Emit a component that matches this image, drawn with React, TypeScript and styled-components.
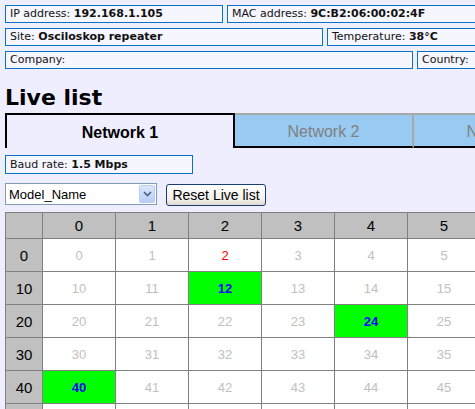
import styled, { createGlobalStyle } from 'styled-components'

const GlobalStyle = createGlobalStyle`
  html, body {
    margin: 0;
    padding: 0;
    overflow: hidden;
    background: #eeeeff;
  }
`

const COLS = [0, 1, 2, 3, 4, 5, 6, 7, 8, 9]
const ROWS = [0, 10, 20, 30, 40, 50, 60]
const ONLINE = [12, 24, 40]
const SELF = 2

type Status = 'off' | 'on' | 'self'

const statusOf = (n: number): Status => {
  if (n === SELF) return 'self'
  if (ONLINE.includes(n)) return 'on'
  return 'off'
}

export default function App() {
  return (
    <>
      <GlobalStyle />
      <Page>
        <InfoRow>
          <InfoBox $width={218}>
            IP address: <b>192.168.1.105</b>
          </InfoBox>
          <InfoBox>
            MAC address: <b>9C:B2:06:00:02:4F</b>
          </InfoBox>
        </InfoRow>
        <InfoRow>
          <InfoBox $width={318}>
            Site: <b>Osciloskop repeater</b>
          </InfoBox>
          <InfoBox>
            Temperature: <b>38°C</b>
          </InfoBox>
        </InfoRow>
        <InfoRow>
          <InfoBox $width={408}>Company:</InfoBox>
          <InfoBox>Country:</InfoBox>
        </InfoRow>

        <Title>Live list</Title>

        <Tabs>
          <Tab $active>Network 1</Tab>
          <Tab>Network 2</Tab>
          <Tab>Network 3</Tab>
        </Tabs>

        <BaudBox>
          Baud rate: <b>1.5 Mbps</b>
        </BaudBox>

        <Controls>
          <SelectWrap>
            <Select defaultValue="Model_Name">
              <option>Model_Name</option>
              <option>Address</option>
            </Select>
            <SelectArrow>
              <svg width="9" height="6" viewBox="0 0 9 6">
                <path d="M1 1l3.5 3.5L8 1" fill="none" stroke="#4d6185" strokeWidth="1.6" />
              </svg>
            </SelectArrow>
          </SelectWrap>
          <ResetButton>Reset Live list</ResetButton>
        </Controls>

        <Grid>
          <thead>
            <tr>
              <Corner />
              {COLS.map((c) => (
                <HeadCell key={c}>{c}</HeadCell>
              ))}
            </tr>
          </thead>
          <tbody>
            {ROWS.map((r) => (
              <tr key={r}>
                <RowHead>{r}</RowHead>
                {COLS.map((c) => (
                  <Cell key={c} $status={statusOf(r + c)}>
                    {r + c}
                  </Cell>
                ))}
              </tr>
            ))}
          </tbody>
        </Grid>
      </Page>
    </>
  )
}

/**
 * style定義
 */
const Page = styled.div`
  padding: 5px;
  width: 900px;
  font-family: 'DejaVu Sans', Verdana, sans-serif;
  color: #111;
`

const InfoRow = styled.div`
  display: flex;
  gap: 4px;
  margin-bottom: 5px;
`

const InfoBox = styled.div<{ $width?: number }>`
  box-sizing: border-box;
  flex: ${({ $width }) => ($width ? `0 0 ${$width}px` : '1 1 auto')};
  height: 18px;
  padding: 0 4px;
  border: 1px solid #0a72c4;
  background: #f6f6ff;
  font-size: 11px;
  line-height: 16px;
  white-space: nowrap;
`

const Title = styled.h1`
  margin: 16px 0 2px;
  font-size: 22px;
  line-height: 26px;
  font-weight: bold;
  color: #000;
`

const Tabs = styled.div`
  display: flex;
  height: 35px;
`

const Tab = styled.div<{ $active?: boolean }>`
  box-sizing: border-box;
  flex: 0 0 ${({ $active }) => ($active ? 230 : 179)}px;
  display: flex;
  align-items: center;
  justify-content: center;
  font-family: 'Liberation Sans', Arial, sans-serif;
  font-size: 16px;
  padding-top: 2px;
  ${({ $active }) =>
    $active
      ? `
    border: 2px solid #000;
    border-bottom: none;
    background: #eeeeff;
    color: #000;
    font-weight: bold;
  `
      : `
    border-top: 2px solid #a8a8a8;
    border-right: 2px solid #a8a8a8;
    border-bottom: 2px solid #000;
    background: #99cbf2;
    color: #808080;
  `}
`

const BaudBox = styled(InfoBox)`
  width: 188px;
  height: 19px;
  margin-top: 7px;
  line-height: 17px;
`

const Controls = styled.div`
  display: flex;
  align-items: center;
  gap: 9px;
  margin-top: 8px;
  height: 24px;
`

const SelectWrap = styled.div`
  position: relative;
  width: 152px;
  height: 22px;
`

const Select = styled.select`
  appearance: none;
  box-sizing: border-box;
  width: 100%;
  height: 100%;
  margin: 0;
  padding: 0 0 0 3px;
  border: 1px solid #7f9db9;
  border-radius: 0;
  background: #fff;
  font-family: 'Liberation Sans', Arial, sans-serif;
  font-size: 13px;
  color: #000;
  outline: none;
`

const SelectArrow = styled.span`
  position: absolute;
  top: 2px;
  right: 2px;
  width: 16px;
  height: 18px;
  box-sizing: border-box;
  border: 1px solid #b9cdf5;
  border-radius: 2px;
  background: linear-gradient(#dce7fc, #b8cdf7);
  display: flex;
  align-items: center;
  justify-content: center;
  pointer-events: none;
`

const ResetButton = styled.button`
  box-sizing: border-box;
  width: 100px;
  height: 22px;
  margin-top: 2px;
  padding: 0;
  border: 1px solid #1c3c72;
  border-radius: 3px;
  background: linear-gradient(#ffffff, #f2f1ec 70%, #dcdad0);
  font-family: 'Liberation Sans', Arial, sans-serif;
  font-size: 14px;
  color: #000;
`

const Grid = styled.table`
  margin-top: 6px;
  border-collapse: collapse;
  font-family: 'Liberation Sans', Arial, sans-serif;
  table-layout: fixed;

  td,
  th {
    border: 1px solid #808080;
    padding: 0;
    text-align: center;
  }
`

const Corner = styled.th`
  width: 36px;
  height: 25px;
  background: #c0c0c0;
`

const HeadCell = styled.th`
  width: 72px;
  height: 25px;
  background: #c0c0c0;
  font-size: 15px;
  font-weight: normal;
  color: #000;
`

const RowHead = styled.td`
  height: 32px;
  background: #c0c0c0;
  font-size: 15px;
  color: #000;
`

const Cell = styled.td<{ $status: Status }>`
  height: 32px;
  font-size: 13px;
  background: ${({ $status }) => ($status === 'on' ? '#00ff00' : '#fff')};
  color: ${({ $status }) =>
    $status === 'on' ? '#0000ff' : $status === 'self' ? '#ff0000' : '#c0c0c0'};
  font-weight: ${({ $status }) => ($status === 'on' ? 'bold' : 'normal')};
`
